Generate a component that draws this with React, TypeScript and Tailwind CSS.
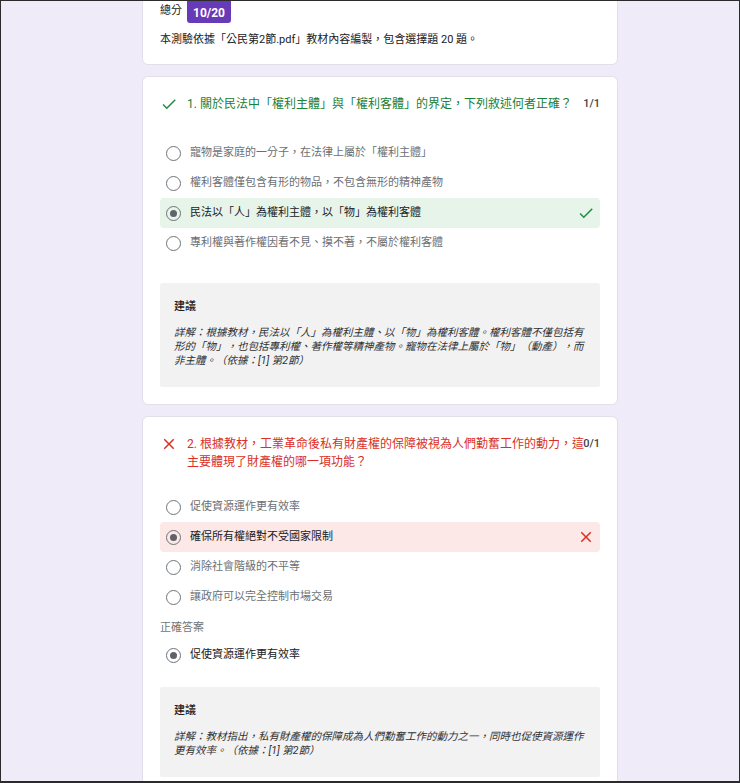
import React from 'react';

const FONT = { fontFamily: 'Roboto, "Noto Sans CJK TC", "Noto Sans", sans-serif' };

function CheckIcon({ className = '' }: { className?: string }) {
  return (
    <svg viewBox="0 0 24 24" width={18} height={18} className={className} fill="currentColor">
      <path d="M9 16.17L4.83 12l-1.42 1.41L9 19 21 7l-1.41-1.41z" />
    </svg>
  );
}

function CloseIcon({ className = '' }: { className?: string }) {
  return (
    <svg viewBox="0 0 24 24" width={18} height={18} className={className} fill="currentColor">
      <path d="M19 6.41L17.59 5 12 10.59 6.41 5 5 6.41 10.59 12 5 17.59 6.41 19 12 13.41 17.59 19 19 17.59 13.41 12z" />
    </svg>
  );
}

function Radio({ checked }: { checked?: boolean }) {
  return (
    <span className="flex h-[15px] w-[15px] shrink-0 items-center justify-center rounded-full border-[1.5px] border-[#6f7378]">
      {checked && <span className="h-[7px] w-[7px] rounded-full bg-[#5f6368]" />}
    </span>
  );
}

type OptState = 'none' | 'right' | 'wrong';

function Option({ text, state = 'none', checked }: { text: string; state?: OptState; checked?: boolean }) {
  const bg = state === 'right' ? 'bg-[#e6f4ea]' : state === 'wrong' ? 'bg-[#fce8e6]' : '';
  const sel = checked || state !== 'none';
  return (
    <div className={`flex h-[30px] items-center rounded-[4px] pl-[6px] pr-[5px] ${bg}`}>
      <Radio checked={sel} />
      <span className={`ml-[9px] flex-1 text-[11px] leading-[16px] ${sel ? 'text-[#202124]' : 'text-[#6b6f74]'}`}>
        {text}
      </span>
      {state === 'right' && <CheckIcon className="text-[#1e8e3e]" />}
      {state === 'wrong' && <CloseIcon className="text-[#d93025]" />}
    </div>
  );
}

function Advice({ lines }: { lines: string }) {
  return (
    <div className="rounded-[2px] bg-[#f2f2f2] pb-[19px] pl-[14px] pr-[13px] pt-[16px]">
      <div className="text-[11px] leading-[16px] font-medium text-[#202124]">建議</div>
      <p className="mt-[11px] text-[10.5px] italic leading-[14px] text-[#303134]">{lines}</p>
    </div>
  );
}

export default function App() {
  return (
    <div
      style={FONT}
      className="h-[783px] w-[740px] overflow-hidden border border-b-2 border-[#2b2b2b] bg-[#efebf8] [text-spacing-trim:space-all]"
    >
      <div className="flex justify-center pl-[20px]">
        <div className="flex w-[476px] flex-col gap-[11px]">
          {/* score card */}
          <div className="-mt-[10px] rounded-[6px] border border-[#e2dfe8] bg-white px-[17px] pb-[16px] pt-[7px]">
            <div className="flex h-[24px] items-center">
              <span className="text-[11px] text-[#202124]">總分</span>
              <span className="ml-[5px] flex h-[24px] items-center rounded-[3px] bg-[#673ab7] px-[6px] pt-[3px] text-[12px] font-bold text-white">
                10/20
              </span>
            </div>
            <p className="mt-[9px] text-[11px] leading-[16px] text-[#202124]">
              本測驗依據「公民第2節.pdf」教材內容編製，包含選擇題 20 題。
            </p>
          </div>

          {/* question 1 */}
          <div className="rounded-[6px] border border-[#e2dfe8] bg-white px-[17px] pb-[17px] pt-[18px]">
            <div className="flex items-start">
              <CheckIcon className="shrink-0 text-[#1e8e3e]" />
              <p className="ml-[9px] flex-1 text-[12px] leading-[18px] text-[#188038]">
                1. 關於民法中「權利主體」與「權利客體」的界定，下列敘述何者正確？
              </p>
              <span className="-ml-[4px] shrink-0 text-[11px] leading-[18px] font-medium text-[#3c4043]">1/1</span>
            </div>
            <div className="mt-[25px] flex flex-col">
              <Option text="寵物是家庭的一分子，在法律上屬於「權利主體」" />
              <Option text="權利客體僅包含有形的物品，不包含無形的精神產物" />
              <Option text="民法以「人」為權利主體，以「物」為權利客體" state="right" />
              <Option text="專利權與著作權因看不見、摸不著，不屬於權利客體" />
            </div>
            <div className="mt-[25px]">
              <Advice lines="詳解：根據教材，民法以「人」為權利主體、以「物」為權利客體。權利客體不僅包括有形的「物」，也包括專利權、著作權等精神產物。寵物在法律上屬於「物」（動產），而非主體。（依據：[1] 第2節）" />
            </div>
          </div>

          {/* question 2 */}
          <div className="rounded-[6px] border border-[#e2dfe8] bg-white px-[17px] pb-[18px] pt-[18px]">
            <div className="flex items-start">
              <CloseIcon className="shrink-0 text-[#d93025]" />
              <p className="ml-[9px] flex-1 text-[12px] leading-[18px] text-[#d93025]">
                2. 根據教材，工業革命後私有財產權的保障被視為人們勤奮工作的動力，這主要體現了財產權的哪一項功能？
              </p>
              <span className="-ml-[4px] shrink-0 text-[11px] leading-[18px] font-medium text-[#3c4043]">0/1</span>
            </div>
            <div className="mt-[21px] flex flex-col">
              <Option text="促使資源運作更有效率" />
              <Option text="確保所有權絕對不受國家限制" state="wrong" />
              <Option text="消除社會階級的不平等" />
              <Option text="讓政府可以完全控制市場交易" />
            </div>
            <div className="mt-[8px] text-[11px] leading-[16px] text-[#70757a]">正確答案</div>
            <div className="mt-[4px]">
              <Option text="促使資源運作更有效率" checked />
            </div>
            <div className="mt-[17px]">
              <Advice lines="詳解：教材指出，私有財產權的保障成為人們勤奮工作的動力之一，同時也促使資源運作更有效率。（依據：[1] 第2節）" />
            </div>
          </div>
        </div>
      </div>
    </div>
  );
}
